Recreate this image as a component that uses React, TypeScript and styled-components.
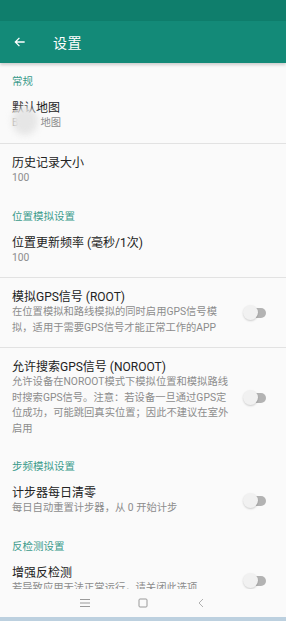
import React from 'react';
import styled, { createGlobalStyle } from 'styled-components';

const GlobalStyle = createGlobalStyle`
  html, body {
    margin: 0;
    padding: 0;
    background: #fafafa;
  }
  * {
    box-sizing: border-box;
  }
`;

const Screen = styled.div`
  width: 286px;
  height: 621px;
  display: flex;
  flex-direction: column;
  overflow: hidden;
  background: #fafafa;
  font-family: Roboto, 'Noto Sans CJK SC', sans-serif;
`;

const StatusBar = styled.div`
  height: 21px;
  flex: none;
  background: #0f7e6c;
`;

const Toolbar = styled.div`
  height: 42px;
  flex: none;
  display: flex;
  align-items: center;
  background: #138a78;
  box-shadow: 0 2px 3px rgba(0, 0, 0, 0.18);
  position: relative;
  z-index: 1;
`;

const BackButton = styled.div`
  width: 41px;
  height: 42px;
  display: flex;
  align-items: center;
  padding-left: 13px;
`;

const Title = styled.div`
  margin-left: 12px;
  color: #ffffff;
  font-size: 14px;
  letter-spacing: 0.5px;
`;

const Content = styled.div`
  flex: 1;
  overflow: hidden;
`;

const Category = styled.div`
  padding: 12px 12px 0;
  line-height: 14px;
  font-size: 10.5px;
  color: #3b9a8b;
`;

const Pref = styled.div<{ divider?: boolean }>`
  display: flex;
  align-items: center;
  min-height: 54px;
  padding: 12px 16px 12px 12px;
  border-bottom: ${p => (p.divider ? '1px solid #e2e2e2' : 'none')};
`;

const PrefText = styled.div`
  flex: 1;
  min-width: 0;
`;

const PrefTitle = styled.div`
  font-size: 12px;
  line-height: 14px;
  color: #222222;
`;

const PrefSummary = styled.div`
  font-size: 10.3px;
  line-height: 15.5px;
  color: #8c8c8c;
`;

const Blur = styled.span`
  display: inline-block;
  width: 22px;
  height: 12px;
  vertical-align: middle;
  position: relative;
  &::after {
    content: '';
    position: absolute;
    left: -6px;
    top: -10px;
    width: 26px;
    height: 28px;
    border-radius: 50%;
    background: #e6e6e6;
    filter: blur(3px);
  }
`;

const SwitchBox = styled.div`
  width: 30px;
  height: 20px;
  flex: none;
  position: relative;
  margin-left: 8px;
`;

const Track = styled.div`
  position: absolute;
  left: 6px;
  top: 5px;
  width: 20px;
  height: 10px;
  border-radius: 5px;
  background: #b3b3b3;
`;

const Thumb = styled.div`
  position: absolute;
  left: 3px;
  top: 2px;
  width: 15px;
  height: 15px;
  border-radius: 50%;
  background: #f1f1f1;
  box-shadow: 0 1px 2px rgba(0, 0, 0, 0.18);
`;

const NavBar = styled.div`
  height: 28px;
  flex: none;
  display: flex;
  align-items: center;
  justify-content: center;
  background: #fafafa;
  position: relative;
  z-index: 1;
`;

const NavSlot = styled.div`
  width: 58px;
  height: 28px;
  display: flex;
  align-items: center;
  justify-content: center;
`;

const BottomLine = styled.div`
  height: 4px;
  flex: none;
  background: #bcd0df;
`;

const Switch = () => (
  <SwitchBox>
    <Track />
    <Thumb />
  </SwitchBox>
);

type Item = {
  title: string;
  summary: React.ReactNode;
  divider?: boolean;
  toggle?: boolean;
};

const Row = ({ title, summary, divider, toggle }: Item) => (
  <Pref divider={divider}>
    <PrefText>
      <PrefTitle>{title}</PrefTitle>
      <PrefSummary>{summary}</PrefSummary>
    </PrefText>
    {toggle && <Switch />}
  </Pref>
);

const App = () => (
  <>
    <GlobalStyle />
    <Screen>
      <StatusBar />
      <Toolbar>
        <BackButton>
          <svg width="14" height="14" viewBox="0 0 24 24" fill="none">
            <path d="M20 12H5M11 5l-7 7 7 7" stroke="#ffffff" strokeWidth="2.2" />
          </svg>
        </BackButton>
        <Title>设置</Title>
      </Toolbar>
      <Content>
        <Category>常规</Category>
        <Row
          title="默认地图"
          summary={
            <>
              B<Blur />地图
            </>
          }
          divider
        />
        <Row title="历史记录大小" summary="100" />

        <Category>位置模拟设置</Category>
        <Row title="位置更新频率 (毫秒/1次)" summary="100" divider />
        <Row
          title="模拟GPS信号 (ROOT)"
          summary="在位置模拟和路线模拟的同时启用GPS信号模拟，适用于需要GPS信号才能正常工作的APP"
          divider
          toggle
        />
        <Row
          title="允许搜索GPS信号 (NOROOT)"
          summary="允许设备在NOROOT模式下模拟位置和模拟路线时搜索GPS信号。注意：若设备一旦通过GPS定位成功，可能跳回真实位置；因此不建议在室外启用"
          toggle
        />

        <Category>步频模拟设置</Category>
        <Row title="计步器每日清零" summary="每日自动重置计步器，从 0 开始计步" toggle />

        <Category>反检测设置</Category>
        <Row title="增强反检测" summary="若导致应用无法正常运行，请关闭此选项" toggle />
      </Content>
      <NavBar>
        <NavSlot>
          <svg width="12" height="10" viewBox="0 0 12 10">
            <path d="M1 1.5h10M1 5h10M1 8.5h10" stroke="#9a9a9a" strokeWidth="1" />
          </svg>
        </NavSlot>
        <NavSlot>
          <svg width="10" height="10" viewBox="0 0 10 10">
            <rect x="1" y="1" width="8" height="8" rx="1" fill="none" stroke="#9a9a9a" strokeWidth="1" />
          </svg>
        </NavSlot>
        <NavSlot>
          <svg width="8" height="10" viewBox="0 0 8 10">
            <path d="M6 1L2 5l4 4" fill="none" stroke="#b0b0b0" strokeWidth="1" />
          </svg>
        </NavSlot>
      </NavBar>
      <BottomLine />
    </Screen>
  </>
);

export default App;
